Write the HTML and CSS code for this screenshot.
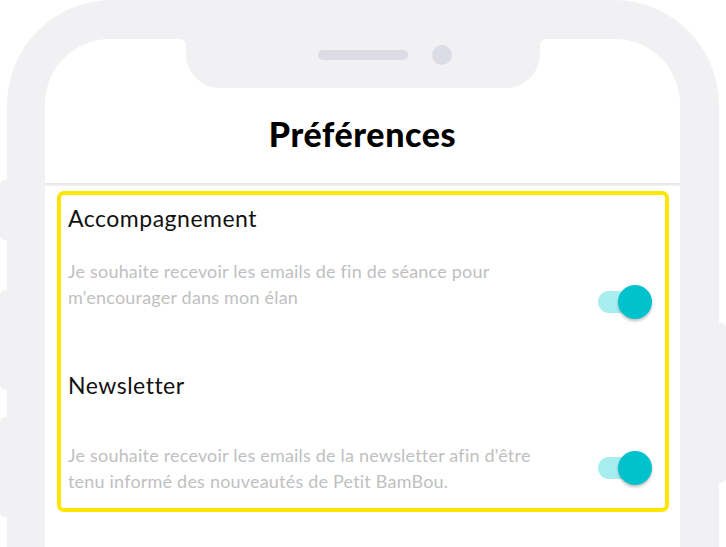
FILE: index.html
```html
<!DOCTYPE html>
<html lang="fr">
<head>
<meta charset="utf-8">
<title>Préférences</title>
<link rel="stylesheet" href="styles.css">
</head>
<body>
<div class="stage">
  <div class="phone">
    <span class="btn btn-l1"></span>
    <span class="btn btn-l2"></span>
    <span class="btn btn-l3"></span>
    <span class="btn btn-r1"></span>
    <div class="screen">
      <div class="notch">
        <span class="speaker"></span>
        <span class="camera"></span>
      </div>
      <header class="header">
        <h1 class="title">Préférences</h1>
      </header>
      <div class="divider"></div>
      <section class="prefs">
        <div class="pref">
          <h2 class="pref-title">Accompagnement</h2>
          <div class="pref-body pref-body--first">
            <p class="pref-desc">Je souhaite recevoir les emails de fin de séance pour m'encourager dans mon élan</p>
            <div class="switch switch--first"><span class="track"></span><span class="knob"></span></div>
          </div>
        </div>
        <div class="pref pref--second">
          <h2 class="pref-title">Newsletter</h2>
          <div class="pref-body pref-body--second">
            <p class="pref-desc">Je souhaite recevoir les emails de la newsletter afin d'être tenu informé des nouveautés de Petit BamBou.</p>
            <div class="switch switch--second"><span class="track"></span><span class="knob"></span></div>
          </div>
        </div>
      </section>
    </div>
  </div>
</div>
</body>
</html>
```
FILE: styles.css
```css
html, body {
  margin: 0;
  padding: 0;
  height: 100%;
  overflow: hidden;
  background: #ffffff;
}

body {
  font-family: "Nunito", "Lato", "Open Sans", sans-serif;
}

.stage {
  padding: 0 7px;
}

.phone {
  position: relative;
  width: 712px;
  min-height: 620px;
  box-sizing: border-box;
  padding: 39px 39px 0 38px;
  background: #f1f1f3;
  border-radius: 105px 105px 0 0;
}

.btn {
  position: absolute;
  width: 12px;
  background: #f1f1f3;
  border-radius: 5px;
}
.btn-l1 { left: -7px; top: 180px; height: 60px; }
.btn-l2 { left: -7px; top: 290px; height: 100px; }
.btn-l3 { left: -7px; top: 417px; height: 100px; }
.btn-r1 { right: -7px; top: 323px; height: 160px; }

.screen {
  position: relative;
  background: #ffffff;
  border-radius: 65px 65px 0 0;
  min-height: 600px;
}

.notch {
  position: absolute;
  left: 141px;
  top: 0;
  width: 354px;
  height: 49px;
  background: #f1f1f3;
  border-radius: 0 0 34px 34px;
}
.notch::before,
.notch::after {
  content: "";
  position: absolute;
  top: 0;
  width: 6px;
  height: 6px;
}
.notch::before {
  left: -6px;
  background: radial-gradient(circle at 0 100%, transparent 5.5px, #f1f1f3 6px);
}
.notch::after {
  right: -6px;
  background: radial-gradient(circle at 100% 100%, transparent 5.5px, #f1f1f3 6px);
}

.speaker {
  position: absolute;
  left: 132px;
  top: 11px;
  width: 90px;
  height: 10px;
  border-radius: 5px;
  background: #dcdce6;
}
.camera {
  position: absolute;
  left: 246px;
  top: 6px;
  width: 20px;
  height: 20px;
  border-radius: 50%;
  background: #dcdce6;
}

.header {
  padding: 75px 0 29px;
  text-align: center;
}
.title {
  margin: 0;
  font-family: "Lato", sans-serif;
  font-weight: 900;
  font-size: 34px;
  letter-spacing: 0.6px;
  line-height: 40px;
  color: #000000;
}

.divider {
  height: 3px;
  background: linear-gradient(#e4e4e6, #f4f4f5);
}

.prefs {
  margin: 5px 11px 0 12px;
  border: 4px solid #ffe600;
  border-radius: 7px;
  padding: 8px 13px 14px 7px;
}

.pref-title {
  margin: 0;
  font-family: "Lato", sans-serif;
  font-weight: 400;
  font-size: 23px;
  letter-spacing: 0.5px;
  line-height: 30px;
  color: #111111;
}

.pref--second {
  margin-top: 51px;
}

.pref-body {
  display: flex;
  align-items: flex-start;
  justify-content: space-between;
}
.pref-body--first { margin-top: 25px; }
.pref-body--second { margin-top: 42px; }

.pref-desc {
  margin: 0;
  max-width: 472px;
  font-family: "Lato", sans-serif;
  font-size: 18px;
  letter-spacing: 0.2px;
  line-height: 26px;
  color: #bfbfbf;
}

.switch {
  position: relative;
  flex: none;
  width: 54px;
  height: 34px;
}
.switch--first { margin-top: 27px; }
.switch--second { margin-top: 9px; }

.track {
  position: absolute;
  left: 0;
  top: 6px;
  width: 48px;
  height: 22px;
  border-radius: 11px;
  background: #a8eef0;
}
.knob {
  position: absolute;
  right: 0;
  top: 0;
  width: 34px;
  height: 34px;
  border-radius: 50%;
  background: #00c2cc;
  box-shadow: 0 2px 3px rgba(0, 0, 0, 0.25);
}
```
